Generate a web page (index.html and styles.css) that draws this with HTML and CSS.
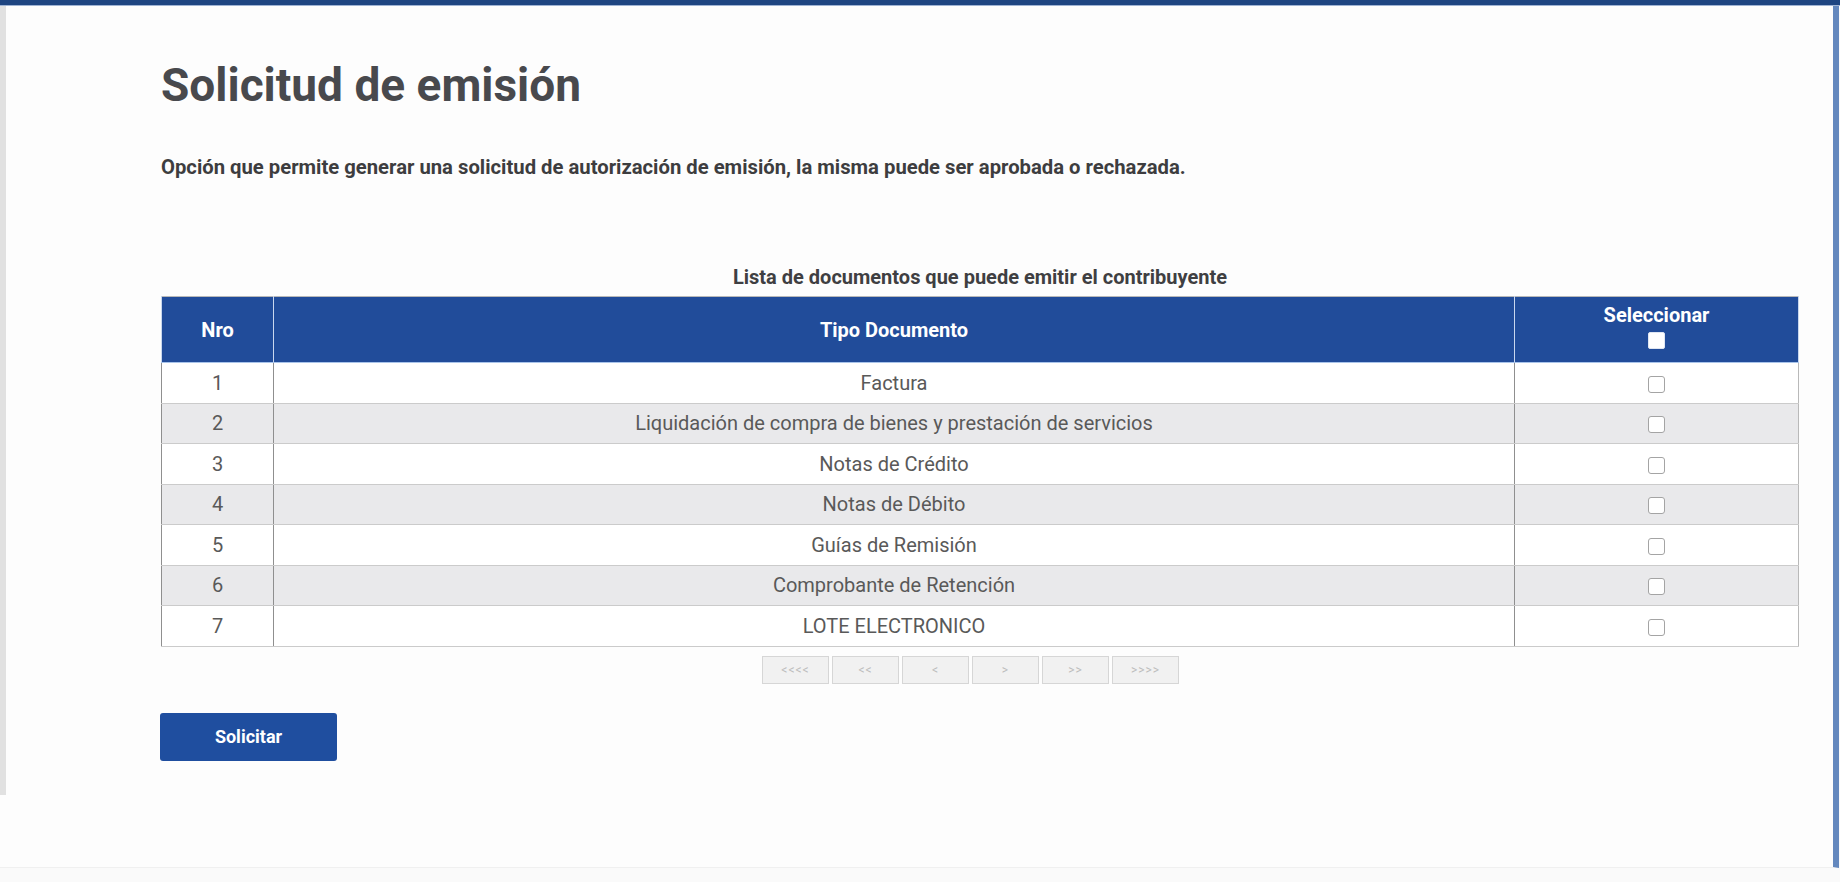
FILE: index.html
```html
<!DOCTYPE html>
<html lang="es">
<head>
    <meta charset="UTF-8">
    <title>Solicitud de emisión</title>
    <link rel="stylesheet" href="styles.css">
</head>
<body>

<div class="topBar"></div>
<div class="screen">
    <div class="page">
        <h1 class="title">Solicitud de emisión</h1>
        <p class="intro">Opción que permite generar una solicitud de autorización de emisión, la misma puede ser aprobada o rechazada.</p>

        <div class="docs">
            <p class="docsCaption">Lista de documentos que puede emitir el contribuyente</p>
            <table class="docsTable">
                <thead>
                    <tr>
                        <th class="colNro">Nro</th>
                        <th class="colTipo">Tipo Documento</th>
                        <th class="colSel">Seleccionar<br/><input type="checkbox" class="checkAll"/></th>
                    </tr>
                </thead>
                <tbody>
                    <tr><td>1</td><td>Factura</td><td><input type="checkbox" class="check"/></td></tr>
                    <tr><td>2</td><td>Liquidación de compra de bienes y prestación de servicios</td><td><input type="checkbox" class="check"/></td></tr>
                    <tr><td>3</td><td>Notas de Crédito</td><td><input type="checkbox" class="check"/></td></tr>
                    <tr><td>4</td><td>Notas de Débito</td><td><input type="checkbox" class="check"/></td></tr>
                    <tr><td>5</td><td>Guías de Remisión</td><td><input type="checkbox" class="check"/></td></tr>
                    <tr><td>6</td><td>Comprobante de Retención</td><td><input type="checkbox" class="check"/></td></tr>
                    <tr><td>7</td><td>LOTE ELECTRONICO</td><td><input type="checkbox" class="check"/></td></tr>
                </tbody>
            </table>
            <div class="pager">
                <span class="pagerBtn">&lt;&lt;&lt;&lt;</span>
                <span class="pagerBtn">&lt;&lt;</span>
                <span class="pagerBtn">&lt;</span>
                <span class="pagerBtn">&gt;</span>
                <span class="pagerBtn">&gt;&gt;</span>
                <span class="pagerBtn">&gt;&gt;&gt;&gt;</span>
            </div>
        </div>

        <button type="button" class="btnSolicitar">Solicitar</button>
    </div>
</div>

</body>
</html>
```

FILE: styles.css
```css
body,h1,p,table,th,td,button,input{ margin: 0; padding: 0;}
table{ border-collapse: collapse;}
/* reset */

body{
    background: #fafafa;
    font-family: Roboto, "Liberation Sans", sans-serif;
    width: 1840px;
    height: 882px;
    overflow: hidden;
}
.topBar{
    height: 5px;
    background: #1e4581;
    border-bottom: 1px solid #9fb3d3;
}
.screen{
    width: 1839px;
    height: 862px;
    background: #fdfdfd;
    border-right: 6px solid #6488be;
    border-bottom: 1px solid #f0f0f0;
    box-sizing: border-box;
}
.page{
    min-height: 789px;
    border-left: 6px solid #e1e1e1;
    padding: 52px 0 0 155px;
    box-sizing: border-box;
}
.title{
    font-size: 46px;
    line-height: 54px;
    font-weight: 700;
    color: #48494d;
}
.intro{
    margin-top: 42px;
    font-size: 20.25px;
    line-height: 26px;
    font-weight: 700;
    color: #3d3d3f;
}
.docs{
    width: 1638px;
    margin-top: 85px;
}
.docsCaption{
    font-size: 20px;
    line-height: 24px;
    font-weight: 700;
    color: #3f3f42;
    text-align: center;
    margin-bottom: 7px;
}
.docsTable{
    width: 100%;
    border: 1px solid #b9b9b9;
}
.docsTable th{
    height: 66px;
    background: #214c9a;
    color: #ffffff;
    font-size: 20px;
    font-weight: 700;
    line-height: 24px;
    border: 1px solid #c9d7ee;
    border-top: none;
    border-bottom: 1px solid #a9c4ea;
    box-sizing: border-box;
}
.docsTable .colNro{ width: 112px;}
.docsTable .colSel{ width: 284px; padding-bottom: 5px;}
.docsTable td{
    height: 39.5px;
    font-size: 20px;
    color: #595959;
    text-align: center;
    border-bottom: 1px solid #cbcbcb;
    border-left: 1px solid #8f8f8f;
}
.docsTable tbody tr:nth-child(even) td{
    background: #e9e9eb;
}
.docsTable tbody tr:nth-child(odd) td{
    background: #ffffff;
}
.check,.checkAll{
    -webkit-appearance: none;
    appearance: none;
    width: 17px;
    height: 17px;
    border-radius: 3px;
    vertical-align: middle;
    display: inline-block;
    margin: 0;
}
.check{
    border: 1px solid #a4a4a4;
    background: #ffffff;
}
.checkAll{
    border: 1px solid #dfe6f2;
    background: #ffffff;
    border-radius: 2px;
}
.pager{
    display: flex;
    justify-content: center;
    gap: 3px;
    padding-right: 19px;
    margin-top: 9px;
}
.pagerBtn{
    width: 67px;
    height: 28px;
    box-sizing: border-box;
    border: 1px solid #d6d6d6;
    background: #f1f1f1;
    color: #bdbdbd;
    font-size: 12px;
    letter-spacing: 1px;
    line-height: 26px;
    text-align: center;
}
.btnSolicitar{
    margin-top: 29px;
    margin-left: -1px;
    width: 177px;
    height: 48px;
    border: none;
    border-radius: 3px;
    background: #1f4e9f;
    color: #ffffff;
    font-family: Roboto, "Liberation Sans", sans-serif;
    font-size: 18px;
    font-weight: 700;
    display: block;
}
```
